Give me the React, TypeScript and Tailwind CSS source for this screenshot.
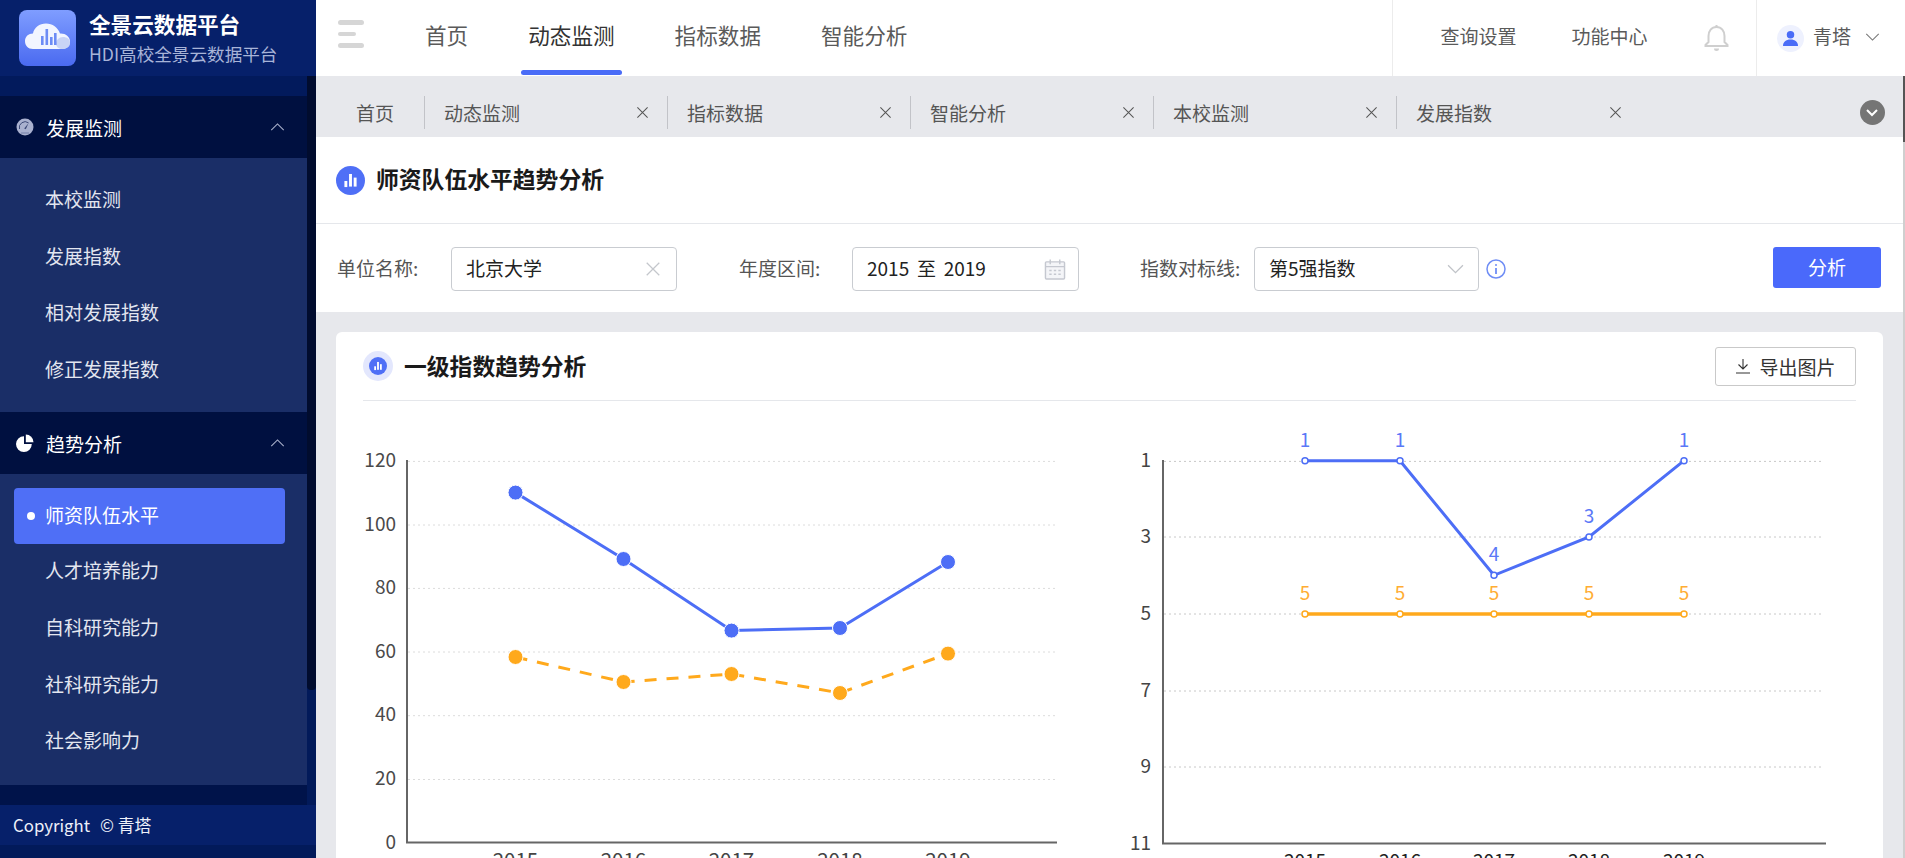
import React from "react";

const X = ({ className = "" }: { className?: string }) => (
  <svg viewBox="0 0 14 14" className={className} fill="none" stroke="currentColor" strokeWidth="1.1">
    <path d="M1.5 1.5l11 11M12.5 1.5l-11 11" />
  </svg>
);

const Chevron = ({ up = false, className = "" }: { up?: boolean; className?: string }) => (
  <svg viewBox="0 0 16 9" className={className} fill="none" stroke="currentColor" strokeWidth="1.2">
    <path d={up ? "M1 8l7-7 7 7" : "M1 1l7 7 7-7"} />
  </svg>
);

const Logo = () => (
  <svg viewBox="0 0 57 56" className="w-[57px] h-[56px] shrink-0">
    <defs>
      <linearGradient id="lg" x1="0" y1="0" x2="0" y2="1">
        <stop offset="0" stopColor="#7f9dff" />
        <stop offset="1" stopColor="#4a6af0" />
      </linearGradient>
    </defs>
    <rect width="57" height="56" rx="8" fill="url(#lg)" />
    <path d="M14 39c-5 0-8-3.500-8-8s3.500-7.500 8-7.500c1-6 6.500-10 13-10 6.500 0 12 4 14 10 5-.5 10 3 10 8 0 4.500-3.500 7.500-8 7.500z" fill="#f2f5ff" />
    <path d="M43 39c-3.500 0-6-2.500-6-5.500 0-3.500 3-6.500 7-6.500 4 0 7 2 7 6 0 3.500-3 6-8 6z" fill="#c9d4f6" />
    <g fill="#6d8cf5">
      <rect x="22" y="26" width="2.600" height="9" />
      <rect x="26.500" y="19" width="2.600" height="16" />
      <rect x="31" y="27" width="2.600" height="8" />
      <rect x="35" y="23" width="2.600" height="12" />
    </g>
  </svg>
);

const Gauge = () => (
  <svg viewBox="0 0 18 18" className="w-[18px] h-[18px] shrink-0">
    <circle cx="9" cy="9" r="8.500" fill="#a9b1cf" />
    <path d="M3.500 11a5.800 5.800 0 0 1 9-6.200" fill="none" stroke="#3d4a78" strokeWidth="1" />
    <path d="M8.200 10.500L12.600 5l-2.800 6.300z" fill="#3d4a78" />
    <path d="M5 15h8" stroke="#8690b5" strokeWidth="1.500" />
  </svg>
);

const Pie = () => (
  <svg viewBox="0 0 18 18" className="w-[18px] h-[18px] shrink-0">
    <path d="M8 2.200V10h7.800A7.900 7.900 0 1 1 8 2.200z" fill="#fff" />
    <path d="M9.800 .5a7.800 7.800 0 0 1 7.700 7.700H9.800z" fill="#fff" />
  </svg>
);

const BarsIcon = ({ outer, inner }: { outer: number; inner: number }) => (
  <svg viewBox="0 0 30 30" style={{ width: outer, height: outer }} className="shrink-0">
    <circle cx="15" cy="15" r={inner} fill="#4f6ff6" />
    <g fill="#fff">
      <rect x={15 - inner * 0.42} y="15.500" width={inner * 0.2} height={inner * 0.42} />
      <rect x={15 - inner * 0.1} y={15 - inner * 0.45} width={inner * 0.2} height={inner * 0.87} />
      <rect x={15 + inner * 0.22} y={15 - inner * 0.2} width={inner * 0.2} height={inner * 0.62} />
    </g>
  </svg>
);

const SubItem = ({ label }: { label: string }) => (
  <div className="h-[56.700px] pl-[45px] flex items-center text-[19px] leading-none text-[#e3e6f0]">{label}</div>
);

const GroupHead = ({ icon, label }: { icon: React.ReactNode; label: string }) => (
  <div className="h-[62px] bg-[#001040] flex items-center pl-[16px] pr-[22px] text-[19px] leading-none text-white">
    {icon}
    <span className="ml-[12px] flex-1">{label}</span>
    <Chevron up className="w-[15px] h-[8px] text-[#aab2cc]" />
  </div>
);

const Sidebar = () => (
  <aside className="w-[316px] shrink-0 h-full flex flex-col bg-[#021a5a]">
    <div className="h-[76px] shrink-0 bg-[#06206a] flex items-center pl-[19px]">
      <Logo />
      <div className="ml-[13px] flex flex-col">
        <span className="text-[21.6px] leading-none font-bold text-white">全景云数据平台</span>
        <span className="mt-[10px] text-[17.6px] leading-none text-[#a8b4d8]">HDI高校全景云数据平台</span>
      </div>
    </div>
    <div className="h-[729px] shrink-0 flex">
      <nav className="w-[307px] flex flex-col">
        <div className="h-[20px] bg-[#021a5c]" />
        <GroupHead icon={<Gauge />} label="发展监测" />
        <div className="h-[254px] bg-[#1a2e67] pt-[12px]">
          {["本校监测", "发展指数", "相对发展指数", "修正发展指数"].map((t) => (
            <SubItem key={t} label={t} />
          ))}
        </div>
        <GroupHead icon={<Pie />} label="趋势分析" />
        <div className="h-[311px] bg-[#1a2e67] pt-[14px]">
          <div className="ml-[14px] w-[271px] h-[56px] mb-[-2.500px] pb-[3px] rounded-[4px] bg-[#4f6ff6] flex items-center pl-[13px] text-[19px] leading-none text-white">
            <span className="w-[8px] h-[8px] mt-[3px] rounded-full bg-white mr-[10px]" />
            师资队伍水平
          </div>
          {["人才培养能力", "自科研究能力", "社科研究能力", "社会影响力"].map((t) => (
            <SubItem key={t} label={t} />
          ))}
        </div>
        <div className="h-[20px] bg-[#00134a]" />
      </nav>
      <div className="w-[9px]">
        <div className="h-[614px] bg-[#010c2e] rounded-b-[4px]" />
      </div>
    </div>
    <div className="h-[40px] shrink-0 bg-[#06206a] flex items-center pl-[13px] text-[16.8px] leading-none text-[#eef1fa]">
      <span>Copyright</span>
      <span className="ml-[10px]">© 青塔</span>
    </div>
  </aside>
);

const TopBar = () => (
  <header className="h-[76px] shrink-0 bg-white flex">
    <div className="pl-[22px] pt-[20px] w-[102px] shrink-0 flex flex-col gap-[7px]">
      <span className="w-[26px] h-[5px] rounded-full bg-[#d6d6d6]" />
      <span className="w-[18px] h-[4px] rounded-full bg-[#d6d6d6]" />
      <span className="w-[26px] h-[5px] rounded-full bg-[#d6d6d6]" />
    </div>
    <div className="flex text-[21.6px] leading-none text-[#5a5a5a]">
      <div className="h-full px-[7px] pb-[6px] flex items-center">首页</div>
      <div className="h-full ml-[46px] px-[7px] pb-[6px] flex items-center relative text-[#333]">
        动态监测
        <span className="absolute left-0 right-0 bottom-px h-[5px] rounded-full bg-[#4a6cf7]" />
      </div>
      <div className="h-full ml-[46px] px-[7px] pb-[6px] flex items-center">指标数据</div>
      <div className="h-full ml-[46px] px-[7px] pb-[6px] flex items-center">智能分析</div>
    </div>
    <div className="ml-auto w-[364.500px] h-full border-l border-[#ececec] flex items-center pl-[48px] text-[19px] leading-none text-[#5a5a5a]">
      <span className="mb-[5px]">查询设置</span>
      <span className="ml-[55px] mb-[5px]">功能中心</span>
      <svg viewBox="0 0 25 28" className="ml-[56px] w-[25px] h-[28px]" fill="none" stroke="#cfcfcf" strokeWidth="2">
        <path d="M12.500 3c-5 0-8 4-8 9v6l-3 3v1h22v-1l-3-3v-6c0-5-3-9-8-9z" />
        <path d="M12.500 1v2" />
        <path d="M10 24.500a2.500 2.500 0 0 0 5 0z" fill="#cfcfcf" stroke="none" />
      </svg>
    </div>
    <div className="w-[149px] h-full border-l border-[#ececec] flex items-center pl-[20px] text-[19px] leading-none text-[#5a5a5a]">
      <span className="w-[27px] h-[27px] rounded-full bg-[#eef1fe] flex items-center justify-center">
        <svg viewBox="0 0 16 18" className="w-[15px] h-[17px]" fill="#4a6cf7">
          <circle cx="8" cy="5" r="4" />
          <path d="M0 17c0-4.500 3-7 8-7s8 2.500 8 7z" />
        </svg>
      </span>
      <span className="ml-[9px] mb-[5px]">青塔</span>
      <Chevron className="ml-[14px] mb-[3px] w-[15px] h-[8px] text-[#777]" />
    </div>
  </header>
);

const Tab = ({ label, last = false }: { label: string; last?: boolean }) => (
  <div className={`w-[243px] h-[33px] shrink-0 flex items-center justify-between pl-[19px] pr-[18px] ${last ? "" : "border-r border-[#c2c3c8]"}`}>
    <span>{label}</span>
    <X className="w-[13px] h-[13px] text-[#555]" />
  </div>
);

const TabBar = () => (
  <div className="h-[61px] shrink-0 bg-[#e7e8ec] flex items-end pb-[8px] text-[19px] leading-none text-[#555]">
    <div className="h-[33px] w-[109px] shrink-0 pl-[40px] flex items-center border-r border-[#c2c3c8]">首页</div>
    <Tab label="动态监测" />
    <Tab label="指标数据" />
    <Tab label="智能分析" />
    <Tab label="本校监测" />
    <Tab label="发展指数" last />
    <span className="ml-auto mr-[18.500px] mb-[4px] w-[25px] h-[25px] rounded-full bg-[#757575] flex items-center justify-center">
      <svg viewBox="0 0 12 8" className="w-[12px] h-[8px]" fill="none" stroke="#fff" strokeWidth="2">
        <path d="M1 1l5 5 5-5" />
      </svg>
    </span>
  </div>
);

const Field = ({ w, children }: { w: string; children: React.ReactNode }) => (
  <div className={`${w} h-[44px] shrink-0 rounded-[4px] border border-[#c9ccd1] flex items-center justify-between pl-[14px] text-[19px] leading-none text-[#222]`}>
    {children}
  </div>
);

const Label = ({ children, className = "" }: { children: React.ReactNode; className?: string }) => (
  <div className={`h-[44px] pb-[3px] shrink-0 flex items-center text-[19px] leading-none text-[#555] ${className}`}>{children}</div>
);

const FilterRow = () => (
  <div className="h-[88px] shrink-0 bg-white pt-[23px] pl-[21px] pr-[22px] flex items-start">
    <Label className="w-[114px]">单位名称:</Label>
    <Field w="w-[226px]">
      <span className="mb-[3px]">北京大学</span>
      <X className="w-[16px] h-[16px] mr-[15px] text-[#c4c7cc]" />
    </Field>
    <Label className="ml-[62px] w-[113px]">年度区间:</Label>
    <Field w="w-[227px]">
      <span className="mb-[3px] [word-spacing:3.500px]">2015 至 2019</span>
      <svg viewBox="0 0 22 22" className="w-[22px] h-[21px] mr-[12px]" fill="none" stroke="#c5c8d0" strokeWidth="1.500">
        <rect x="1" y="3" width="20" height="18" rx="1" fill="#f4f5f8" />
        <path d="M1 8h20M6 .5v5M16 .5v5" />
        <path d="M5 12h2.500M9.750 12h2.500M14.500 12h2.500M5 16h2.500M9.750 16h2.500M14.500 16h2.500" />
      </svg>
    </Field>
    <Label className="ml-[61px] w-[114px]">指数对标线:</Label>
    <Field w="w-[225px]">
      <span className="mb-[3px]">第5强指数</span>
      <Chevron className="w-[17px] h-[10px] mr-[14px] text-[#c0c3c8]" />
    </Field>
    <div className="ml-[7px] h-[44px] flex items-center">
      <svg viewBox="0 0 20 20" className="w-[20px] h-[20px]" fill="none" stroke="#6f8df5" strokeWidth="1.500">
        <circle cx="10" cy="10" r="9" />
        <path d="M10 9v6" strokeWidth="1.800" />
        <circle cx="10" cy="6" r="1" fill="#6f8df5" stroke="none" />
      </svg>
    </div>
    <button className="ml-auto w-[108px] h-[41px] pb-[2px] rounded-[3px] bg-[#4a69fb] text-white text-[19px] leading-none">分析</button>
  </div>
);

const BLUE = "#4d6ef6";
const ORANGE = "#ffa91c";

const LeftChart = () => {
  const xs = [515.5, 623.5, 731.5, 840, 948];
  const b = [493.6, 560, 631.6, 629, 563];
  const o = [658, 683, 675, 694, 654.6];
  const rows: [string, number][] = [["120", 462.4], ["100", 526], ["80", 589.4], ["60", 653], ["40", 716.7], ["20", 780.5], ["0", 844]];
  const pts = (ys: number[]) => xs.map((x, i) => `${x},${ys[i]}`).join(" ");
  return (
    <svg viewBox="363 402 737 457" className="w-[737px] h-[457px] shrink-0">
      {rows.slice(0, 6).map(([, y]) => (
        <line key={y} x1="408" x2="1057" y1={y} y2={y} stroke="#dcdcdc" strokeWidth="1" strokeDasharray="2 3" />
      ))}
      {rows.map(([t, y]) => (
        <text key={t} x="396" y={y + 5.5} textAnchor="end" fontSize="19" fill="#4a4a4a">{t}</text>
      ))}
      <path d="M407 461V843.500H1057" fill="none" stroke="#666" strokeWidth="2" />
      <polyline points={pts(b)} fill="none" stroke={BLUE} strokeWidth="3" />
      <polyline points={pts(o)} fill="none" stroke={ORANGE} strokeWidth="3" strokeDasharray="12 10" />
      {xs.map((x, i) => (
        <circle key={`b${i}`} cx={x} cy={b[i]} r="7.500" fill={BLUE} stroke="#fff" strokeWidth="1" />
      ))}
      {xs.map((x, i) => (
        <circle key={`o${i}`} cx={x} cy={o[i]} r="7.500" fill={ORANGE} stroke="#fff" strokeWidth="1" />
      ))}
      {["2015", "2016", "2017", "2018", "2019"].map((t, i) => (
        <text key={t} x={xs[i]} y="869" textAnchor="middle" fontSize="20.500" fill="#444">{t}</text>
      ))}
    </svg>
  );
};

const RightChart = () => {
  const xs = [1305, 1400, 1494, 1589, 1684];
  const b = [461.7, 461.7, 576.3, 538, 461.7];
  const bv = ["1", "1", "4", "3", "1"];
  const rows: [string, number][] = [["1", 462.4], ["3", 538], ["5", 615], ["7", 692], ["9", 768], ["11", 845]];
  return (
    <svg viewBox="1100 402 756 457" className="w-[756px] h-[457px] shrink-0">
      {rows.slice(0, 5).map(([, y]) => (
        <line key={y} x1="1164" x2="1824" y1={y} y2={y} stroke="#c8c8c8" strokeWidth="1" strokeDasharray="2 3" />
      ))}
      {rows.map(([t, y]) => (
        <text key={t} x="1151" y={y + 5.5} textAnchor="end" fontSize="19" fill="#444">{t}</text>
      ))}
      <path d="M1163 461V844.500H1826" fill="none" stroke="#666" strokeWidth="2" />
      <polyline points={xs.map((x, i) => `${x},${b[i]}`).join(" ")} fill="none" stroke={BLUE} strokeWidth="3" />
      <line x1="1305" x2="1684" y1="615" y2="615" stroke={ORANGE} strokeWidth="3.500" />
      {xs.map((x, i) => (
        <g key={x}>
          <circle cx={x} cy={b[i]} r="3" fill="#fff" stroke={BLUE} strokeWidth="1.500" />
          <text x={x} y={b[i] - 14} textAnchor="middle" fontSize="19" fill="#5b78f7">{bv[i]}</text>
          <circle cx={x} cy="615" r="3" fill="#fff" stroke={ORANGE} strokeWidth="1.500" />
          <text x={x} y="601" textAnchor="middle" fontSize="19" fill="#ffad33">5</text>
        </g>
      ))}
      {["2015", "2016", "2017", "2018", "2019"].map((t, i) => (
        <text key={t} x={xs[i]} y="869" textAnchor="middle" fontSize="19" fill="#222">{t}</text>
      ))}
    </svg>
  );
};

const Card = () => (
  <div className="h-full bg-white rounded-t-[6px] px-[27px] overflow-hidden">
    <div className="h-[69px] border-b border-[#e5e7eb] flex items-center">
      <span className="w-[30px] h-[30px] rounded-full bg-[#e3e7fd] flex items-center justify-center">
        <BarsIcon outer={18} inner={15} />
      </span>
      <span className="ml-[11px] text-[22.800px] leading-none font-bold text-[#1a1a1a]">一级指数趋势分析</span>
      <button className="ml-auto w-[141px] h-[39px] rounded-[3px] border border-[#c9c9c9] flex items-center justify-center gap-[8px] text-[19px] leading-none text-[#333]">
        <svg viewBox="0 0 16 16" className="w-[16px] h-[16px]" fill="none" stroke="#333" strokeWidth="1.100">
          <path d="M8 1v10M3.500 6.500L8 11l4.500-4.500M1 15h14" />
        </svg>
        导出图片
      </button>
    </div>
    <div className="flex">
      <LeftChart />
      <RightChart />
    </div>
  </div>
);

export default function App() {
  return (
    <div className="w-[1905px] h-[858px] flex overflow-hidden bg-white font-['Noto_Sans_CJK_SC',sans-serif]">
      <Sidebar />
      <main className="flex-1 min-w-0 h-full flex flex-col">
        <TopBar />
        <div className="flex-1 min-h-0 flex">
          <div className="w-[1587px] shrink-0 h-full flex flex-col">
            <TabBar />
            <div className="h-[87px] shrink-0 bg-white border-b border-[#e5e7eb] flex items-center pl-[20px]">
              <BarsIcon outer={29} inner={15} />
              <span className="ml-[11px] mb-[1px] text-[22.800px] leading-none font-bold text-[#1a1a1a]">师资队伍水平趋势分析</span>
            </div>
            <FilterRow />
            <div className="flex-1 min-h-0 bg-[#e7e8ec] px-[20px] pt-[20px]">
              <Card />
            </div>
          </div>
          <div className="w-[2px] h-full bg-[#cfcfcf]">
            <div className="h-[66px] bg-[#555]" />
          </div>
        </div>
      </main>
    </div>
  );
}
